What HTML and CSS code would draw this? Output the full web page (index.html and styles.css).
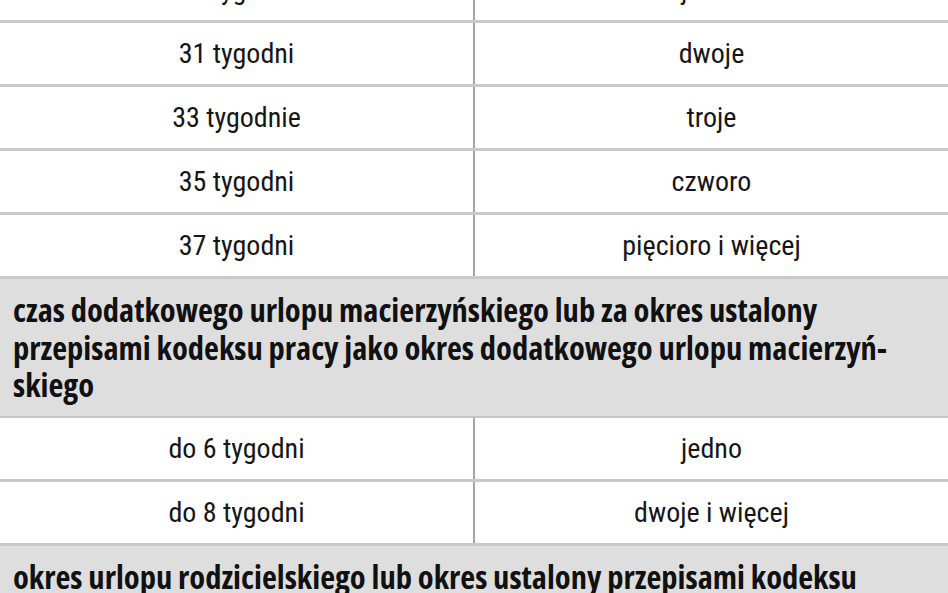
FILE: index.html
```html
<!DOCTYPE html>
<html lang="pl">
<head>
<meta charset="utf-8">
<title>Tabela</title>
<link rel="stylesheet" href="styles.css">
</head>
<body>
<div class="table">
  <div class="row"><div class="cell">28 tygodni</div><div class="cell">jedno</div></div>
  <div class="row"><div class="cell">31 tygodni</div><div class="cell">dwoje</div></div>
  <div class="row"><div class="cell">33 tygodnie</div><div class="cell">troje</div></div>
  <div class="row"><div class="cell">35 tygodni</div><div class="cell">czworo</div></div>
  <div class="row"><div class="cell">37 tygodni</div><div class="cell">pięcioro i więcej</div></div>
  <div class="section">czas dodatkowego urlopu macierzyńskiego lub za okres ustalony<br>przepisami kodeksu pracy jako okres dodatkowego urlopu macierzyń-<br>skiego</div>
  <div class="row"><div class="cell">do 6 tygodni</div><div class="cell">jedno</div></div>
  <div class="row"><div class="cell">do 8 tygodni</div><div class="cell">dwoje i więcej</div></div>
  <div class="section">okres urlopu rodzicielskiego lub okres ustalony przepisami kodeksu<br>pracy jako okres urlopu rodzicielskiego</div>
</div>
</body>
</html>
```
FILE: styles.css
```css
html, body {
  margin: 0;
  padding: 0;
  background: #ffffff;
}

.table {
  width: 948px;
  margin-top: -41px;
}

.row {
  display: grid;
  grid-template-columns: 473px 1fr;
  height: 61px;
  border-bottom: 3px solid #c9c9c9;
}

.cell {
  display: flex;
  align-items: center;
  justify-content: center;
  font-family: "Roboto Condensed", "Open Sans", sans-serif;
  font-size: 28px;
  color: #161616;
}

.cell + .cell {
  border-left: 2px solid #a5a5a5;
}

.section {
  background: #dedede;
  padding: 12px 13px 12px;
  font-family: "Open Sans", "Noto Sans", sans-serif;
  font-stretch: 75%;
  font-weight: 700;
  font-size: 32.5px;
  line-height: 37.5px;
  color: #111111;
  border-bottom: 2px solid #c4c4c4;
  white-space: nowrap;
}
```
